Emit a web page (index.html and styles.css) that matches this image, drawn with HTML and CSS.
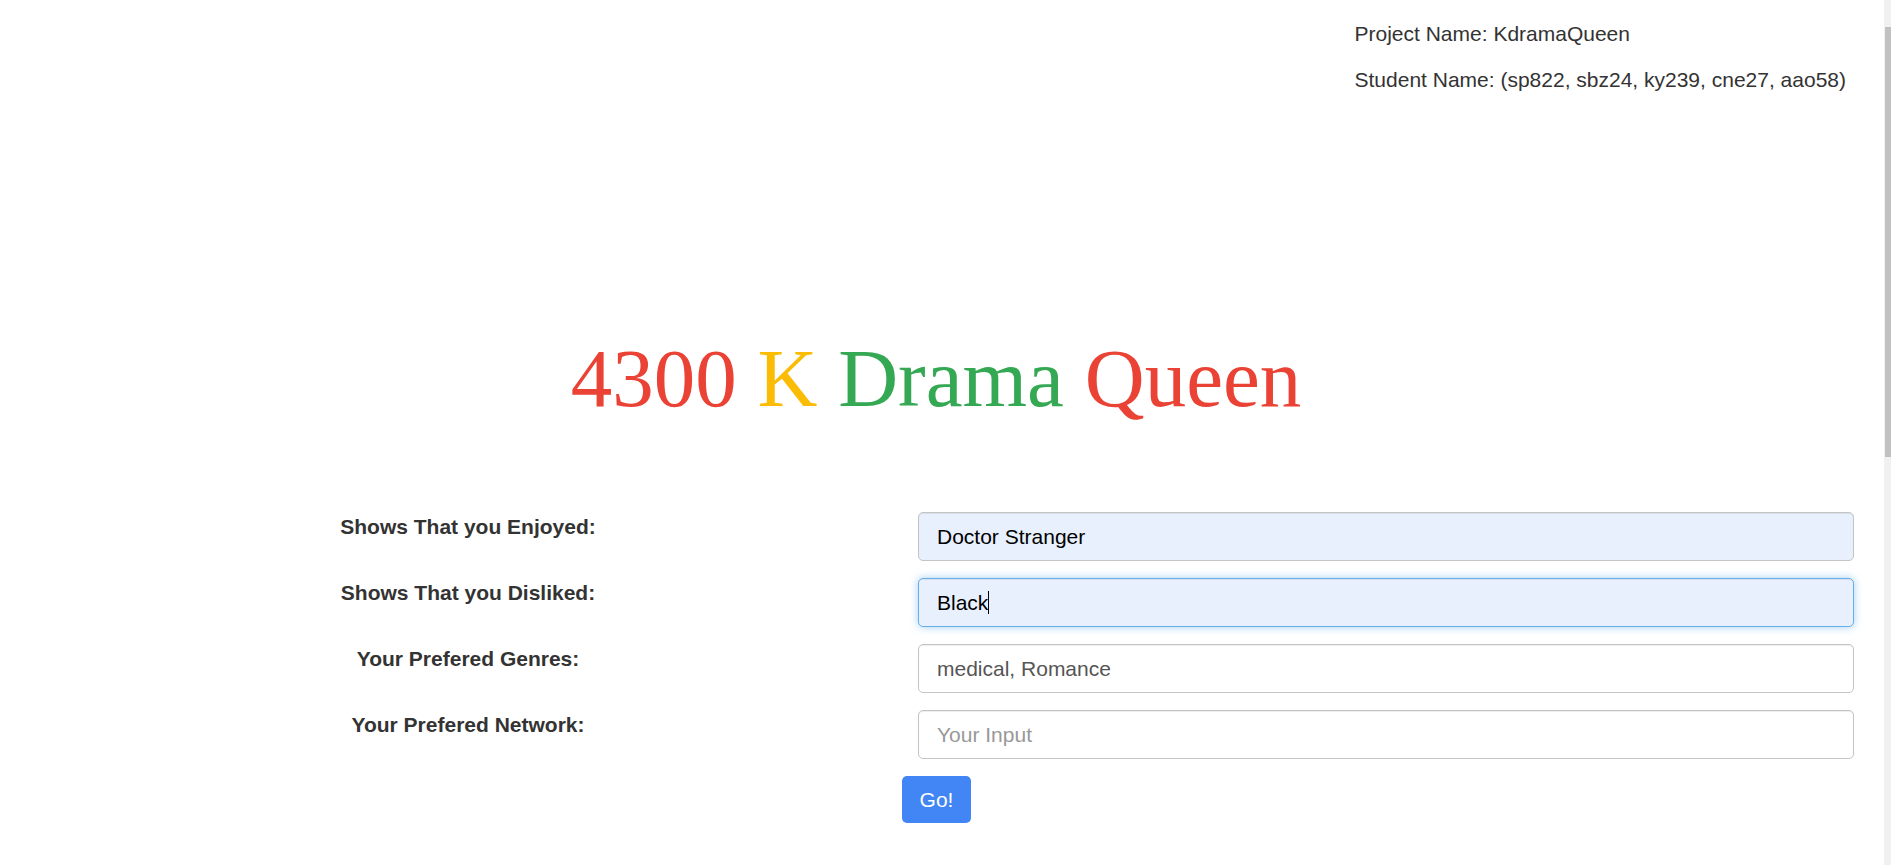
FILE: index.html
```html
<!DOCTYPE html>
<html lang="en">
<head>
<meta charset="utf-8">
<title>KdramaQueen</title>
<link rel="stylesheet" href="styles.css">
</head>
<body>
  <div class="header">
    <div class="info">
      <p>Project Name: KdramaQueen</p>
      <p class="second">Student Name: (sp822, sbz24, ky239, cne27, aao58)</p>
    </div>
  </div>

  <h1 class="title"><span class="red">4300</span> <span class="yellow">K</span> <span class="green">Drama</span> <span class="red">Queen</span></h1>

  <form class="form">
    <label class="label">Shows That you Enjoyed:</label>
    <input class="field filled" type="text" value="Doctor Stranger">
    <label class="label">Shows That you Disliked:</label>
    <div class="field-wrap">
      <input class="field filled focused" type="text" value="Black">
      <span class="caret"></span>
    </div>
    <label class="label">Your Prefered Genres:</label>
    <input class="field" type="text" value="medical, Romance">
    <label class="label">Your Prefered Network:</label>
    <input class="field" type="text" placeholder="Your Input">
    <div class="spacer"></div>
    <div class="actions"><button class="go" type="button">Go!</button></div>
  </form>

  <div class="scrollbar"><div class="thumb"></div></div>
</body>
</html>
```

FILE: styles.css
```css
html, body {
  margin: 0;
  padding: 0;
  background: #fff;
  overflow: hidden;
}
body {
  font-family: "Liberation Sans", Arial, sans-serif;
  color: #333;
  width: 1891px;
  height: 865px;
}
.header {
  display: flex;
  justify-content: flex-end;
  padding: 22px 45px 0 0;
}
.info p {
  margin: 0;
  font-size: 21px;
  line-height: 24px;
  color: #333;
}
.info p.second {
  margin-top: 22px;
}
.title {
  width: 1872px;
  margin: 236px 0 0 0;
  text-align: center;
  font-family: "Liberation Serif", "Times New Roman", serif;
  font-weight: normal;
  font-size: 83px;
  line-height: 100px;
}
.red { color: #ea4335; }
.yellow { color: #fbbc05; }
.green { color: #34a853; }

.form {
  display: grid;
  grid-template-columns: 918px 936px;
  row-gap: 17px;
  margin-top: 84px;
}
.label {
  padding: 2px 0 0 18px;
  text-align: center;
  font-weight: bold;
  font-size: 21px;
  line-height: 25px;
  color: #333;
}
.field-wrap {
  position: relative;
  height: 49px;
}
.field {
  box-sizing: border-box;
  display: block;
  width: 936px;
  height: 49px;
  margin: 0;
  padding: 0 18px;
  border: 1px solid #c4c4c4;
  border-radius: 5px;
  background: #fff;
  font-family: "Liberation Sans", Arial, sans-serif;
  font-size: 21px;
  color: #555;
  box-shadow: inset 0 1px 1px rgba(0, 0, 0, 0.075);
  outline: none;
}
.field.filled {
  background: #e8f0fe;
  color: #000;
}
.field.focused {
  border-color: #66afe9;
  box-shadow: inset 0 1px 1px rgba(0, 0, 0, 0.075), 0 0 8px rgba(102, 175, 233, 0.6);
}
.field::placeholder {
  color: #999;
}
.caret {
  position: absolute;
  left: 70px;
  top: 13px;
  width: 1px;
  height: 23px;
  background: #000;
}
.actions {
  margin-left: -16px;
}
.go {
  width: 69px;
  height: 47px;
  border: none;
  border-radius: 5px;
  background: #4285f4;
  color: #fff;
  font-family: "Liberation Sans", Arial, sans-serif;
  font-size: 21px;
  padding: 0;
  cursor: pointer;
}
.scrollbar {
  position: fixed;
  top: 0;
  right: 0;
  width: 7px;
  height: 865px;
  background: #f1f1f1;
}
.thumb {
  margin: 27px 0 0 1px;
  height: 430px;
  background: #c1c1c1;
}
```
